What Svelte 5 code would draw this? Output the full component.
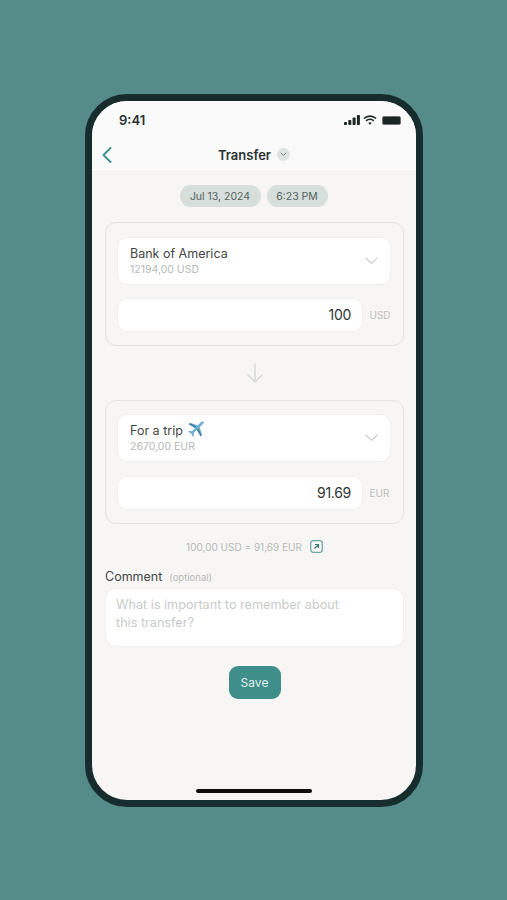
<script>
  const accounts = [
    { name: 'Bank of America', balance: '12194,00 USD', amount: '100', currency: 'USD' },
    { name: 'For a trip', balance: '2670,00 EUR', amount: '91.69', currency: 'EUR', plane: true }
  ];
</script>

{#snippet account(acc)}
  <section class="card" class:target={acc.plane}>
    <div class="select">
      <div class="select-text">
        <div class="acc-name">
          {acc.name}
          {#if acc.plane}
            <svg class="plane" width="18" height="17" viewBox="0 0 19 18">
              <path d="M17.6 .9c-1-.6-2.400-.1-3.300.8L11.500 4.400 3.200 2.200 1.800 3.500 8.600 7.400 5.300 10.800 2.300 10.300 1.200 11.300 4.400 13.300 6.300 16.700 7.400 15.600 7 12.600 10.400 9.300 14.400 16.100 15.700 14.800 13.500 6.400 16.300 3.600C17.200 2.700 18.200 1.500 17.600 .9Z" fill="#6db0cf"/>
              <path d="M3.200 2.200 1.800 3.500 8.600 7.400 10 6 Z M10.400 9.300 14.400 16.100 15.700 14.800 12 8 Z" fill="#3f7fa3"/>
            </svg>
          {/if}
        </div>
        <div class="acc-balance">{acc.balance}</div>
      </div>
      <svg class="chevron" width="13" height="8" viewBox="0 0 14 8" fill="none">
        <path d="M1 1l6 5.500L13 1" stroke="#c9cccb" stroke-width="1.300" stroke-linecap="round" stroke-linejoin="round"/>
      </svg>
    </div>
    <div class="amount-row">
      <div class="amount">{acc.amount}</div>
      <span class="currency">{acc.currency}</span>
    </div>
  </section>
{/snippet}

<main class="page">
  <div class="phone">
    <div class="status">
      <span class="time">9:41</span>
      <div class="status-icons">
        <svg width="16" height="10" viewBox="0 0 16 10" fill="#1c2624">
          <rect x="0" y="7" width="3" height="3" rx=".7"/>
          <rect x="4.300" y="5" width="3" height="5" rx=".7"/>
          <rect x="8.600" y="2.500" width="3" height="7.500" rx=".7"/>
          <rect x="12.900" y="0" width="3" height="10" rx=".7"/>
        </svg>
        <svg width="14" height="10" viewBox="0 0 14 10" fill="none" stroke="#1c2624" stroke-width="1.700">
          <path d="M1 3.500a8.600 8.600 0 0 1 12 0"/>
          <path d="M3.200 5.800a5.400 5.400 0 0 1 7.600 0"/>
          <path d="M7 9.800 5.300 8a2.500 2.500 0 0 1 3.400 0Z" fill="#1c2624" stroke="none"/>
        </svg>
        <div class="battery"></div>
      </div>
    </div>

    <header class="nav">
      <svg class="back" width="10" height="16" viewBox="0 0 10 16" fill="none">
        <path d="M8.500 1 1.500 8l7 7" stroke="#3f8f8c" stroke-width="1.900" stroke-linecap="round" stroke-linejoin="round"/>
      </svg>
      <h1>Transfer</h1>
      <span class="nav-caret">
        <svg width="7" height="5" viewBox="0 0 7 5" fill="none">
          <path d="M1 1l2.500 2.500L6 1" stroke="#7f8887" stroke-width="1" stroke-linecap="round"/>
        </svg>
      </span>
    </header>

    <div class="content">
      <div class="dates">
        <span class="pill wide">Jul 13, 2024</span>
        <span class="pill">6:23 PM</span>
      </div>

      {@render account(accounts[0])}

      <div class="arrow">
        <svg width="18" height="20" viewBox="0 0 18 20" fill="none">
          <path d="M9 1v18M2 12l7 7 7-7" stroke="#d8dad8" stroke-width="1.500" stroke-linecap="round" stroke-linejoin="round"/>
        </svg>
      </div>

      {@render account(accounts[1])}

      <div class="rate">
        <span>100,00 USD = 91,69 EUR</span>
        <svg width="13" height="13" viewBox="0 0 13 13" fill="none">
          <rect x=".7" y=".7" width="11.600" height="11.600" rx="2.500" stroke="#6fa9a5" stroke-width="1.300"/>
          <path d="M4.500 8.500 8.500 4.500M5 4.500h3.500V8" stroke="#3d7f7c" stroke-width="1.200"/>
        </svg>
      </div>

      <div class="comment-label">
        <span class="label">Comment</span>
        <span class="optional">(optional)</span>
      </div>
      <div class="comment">What is important to remember about<br />this transfer?</div>

      <button class="save">Save</button>
    </div>

    <div class="home"></div>
  </div>
</main>

<style>
  :global(body) {
    margin: 0;
    background: #558b88;
  }

  .page {
    height: 900px;
    box-sizing: border-box;
    padding-top: 94px;
    display: flex;
    justify-content: center;
    font-family: Inter, "Noto Sans", sans-serif;
    overflow: hidden;
  }

  .phone {
    width: 338px;
    height: 713px;
    box-sizing: border-box;
    margin-left: 1px;
    border: 7px solid #172d2d;
    border-radius: 42px;
    background: #f7f6f4;
    display: flex;
    flex-direction: column;
    overflow: hidden;
  }

  .status {
    height: 29px;
    flex: none;
    box-sizing: border-box;
    display: flex;
    justify-content: space-between;
    align-items: flex-end;
    padding: 0 15px 2px 27px;
    background: #fafafa;
  }

  .time {
    font-size: 13px;
    font-weight: 600;
    color: #2a3130;
    line-height: 16px;
  }

  .status-icons {
    display: flex;
    align-items: center;
    gap: 3px;
    height: 16px;
  }

  .battery {
    width: 17px;
    height: 7px;
    margin-left: 2px;
    background: #1c2624;
    border-radius: 2px;
    border: 1px solid #6d7472;
  }

  .nav {
    height: 42px;
    flex: none;
    box-sizing: border-box;
    display: flex;
    align-items: center;
    justify-content: center;
    gap: 6px;
    position: relative;
    background: #fafafa;
    border-bottom: 1px solid #ededeb;
    padding-top: 8px;
  }

  .back {
    position: absolute;
    left: 10px;
    top: 17px;
  }

  h1 {
    margin: 0;
    font-size: 13px;
    font-weight: 600;
    color: #2b3231;
  }

  .nav-caret {
    width: 13px;
    height: 13px;
    border-radius: 50%;
    background: #dfe3e2;
    display: flex;
    align-items: center;
    justify-content: center;
  }

  .content {
    flex: 1;
    display: flex;
    flex-direction: column;
    padding: 13px 12px 0 13px;
  }

  .dates {
    display: flex;
    justify-content: center;
    gap: 6px;
    margin: 0 1px 15px -1px;
  }

  .pill {
    width: 61px;
    height: 22px;
    border-radius: 11px;
    background: #d6dfdc;
    color: #58625f;
    font-size: 10.500px;
    display: flex;
    align-items: center;
    justify-content: center;
  }

  .pill.wide {
    width: 81px;
  }

  .card {
    height: 124px;
    box-sizing: border-box;
    border: 1.500px solid #e2e4e1;
    border-radius: 11px;
    padding: 13.500px 12.500px 0 11px;
    display: flex;
    flex-direction: column;
    gap: 13px;
  }

  .card.target {
    padding-top: 12.500px;
    gap: 14px;
  }

  .select {
    height: 48px;
    flex: none;
    box-sizing: border-box;
    background: #fff;
    border: 1px solid #efefed;
    border-radius: 10px;
    padding: 0 12px;
    display: flex;
    align-items: center;
    justify-content: space-between;
  }

  .acc-name {
    display: flex;
    align-items: center;
    gap: 4px;
    height: 17px;
    font-size: 12.500px;
    color: #3f4645;
  }

  .plane {
    margin-top: -2px;
  }

  .acc-balance {
    font-size: 10.500px;
    color: #b5b9b7;
    margin-top: 1px;
    line-height: 14px;
  }

  .amount-row {
    display: flex;
    align-items: center;
    gap: 7px;
  }

  .amount {
    flex: 1;
    height: 34px;
    box-sizing: border-box;
    background: #fff;
    border: 1px solid #efefed;
    border-radius: 10px;
    padding-right: 10.500px;
    display: flex;
    align-items: center;
    justify-content: flex-end;
    font-size: 14px;
    font-weight: 400;
    letter-spacing: -.3px;
    color: #2e3534;
  }

  .currency {
    width: 21px;
    font-size: 10px;
    color: #bcc0be;
  }

  .arrow {
    height: 54px;
    display: flex;
    align-items: center;
    justify-content: center;
  }

  .rate {
    display: flex;
    align-items: center;
    justify-content: center;
    gap: 8px;
    margin-top: 16px;
    height: 13px;
    font-size: 10px;
    color: #b5b9b7;
  }

  .comment-label {
    display: flex;
    align-items: baseline;
    gap: 7px;
    margin-top: 16px;
    height: 18px;
  }

  .label {
    font-size: 12.500px;
    color: #3f4645;
  }

  .optional {
    font-size: 9.500px;
    color: #b5b9b7;
  }

  .comment {
    height: 59px;
    box-sizing: border-box;
    margin-top: 1px;
    background: #fff;
    border: 1px solid #efefed;
    border-radius: 11px;
    padding: 7px 10px;
    font-size: 12.650px;
    line-height: 17.500px;
    color: #c8cbc9;
  }

  .save {
    align-self: center;
    width: 52px;
    height: 33px;
    margin-top: 19px;
    border: none;
    border-radius: 9px;
    background: #3f8e89;
    color: #dfeeec;
    font-family: inherit;
    font-size: 12px;
    padding: 0;
  }

  .home {
    width: 116px;
    height: 4px;
    flex: none;
    align-self: center;
    margin-bottom: 7px;
    background: #0d0d0d;
    border-radius: 2px;
  }
</style>
